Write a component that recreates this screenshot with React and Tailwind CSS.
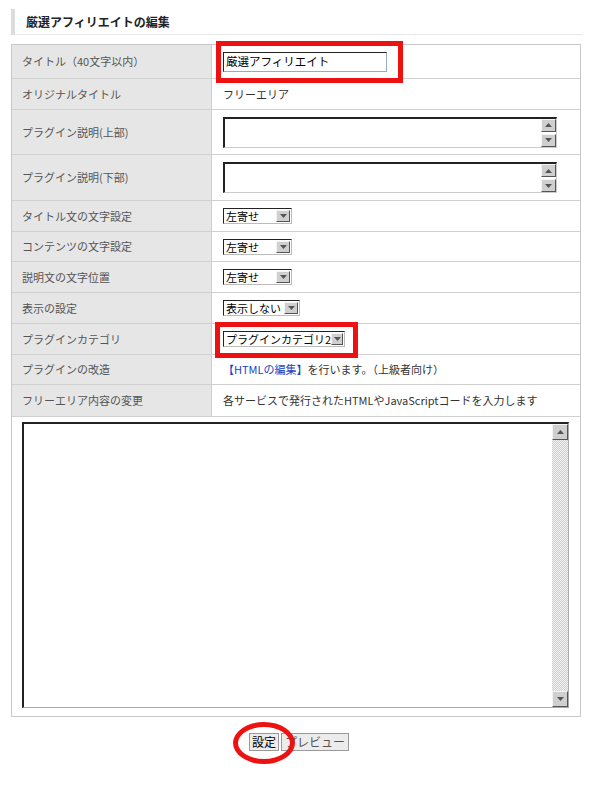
const FONT = { fontFamily: '"Noto Sans CJK JP", "Noto Sans", sans-serif' }

// 小さな三角形の矢印
function Tri({ dir = 'down' }) {
  return (
    <svg width="7" height="4" viewBox="0 0 7 4" className={dir === 'up' ? 'rotate-180' : ''}>
      <path d="M0 0h7L3.5 4z" fill="#555" />
    </svg>
  )
}

function ArrowBtn({ dir = 'down', className = '' }) {
  return (
    <div className={`flex items-center justify-center bg-[#cfcfcf] border border-t-[#f4f4f4] border-l-[#f4f4f4] border-b-[#555] border-r-[#555] ${className}`}>
      <Tri dir={dir} />
    </div>
  )
}

function Select({ label, width }) {
  return (
    <div className={`flex h-[16px] items-stretch bg-white border border-t-[#222] border-l-[#222] border-b-[#bbb] border-r-[#bbb] ${width}`}>
      <span className="flex-1 pl-[2px] text-[11px] leading-[14px] text-black whitespace-nowrap">{label}</span>
      <ArrowBtn className="w-[14px] my-[1px] mr-[1px]" />
    </div>
  )
}

function SmallArea() {
  return (
    <div className="flex h-[31px] w-[334px] bg-white border-2 border-t-[#222] border-l-[#222] border-b-[#ccc] border-r-[#ccc] border-b-[1px] border-r-[1px]">
      <div className="flex-1" />
      <div className="flex flex-col justify-between w-[15px]">
        <ArrowBtn dir="up" className="h-[13px]" />
        <ArrowBtn className="h-[13px]" />
      </div>
    </div>
  )
}

const ROWS = [
  { label: 'タイトル（40文字以内）', h: 'h-[34px]', value: (
    <div className="h-[20px] w-[164px] bg-white border border-t-[#222] border-l-[#222] border-b-[#9ab] border-r-[#9ab] px-[2px] text-[11.5px] leading-[17px] text-black">厳選アフィリエイト</div>
  ) },
  { label: 'オリジナルタイトル', h: 'h-[31px]', value: <span>フリーエリア</span> },
  { label: 'プラグイン説明(上部)', h: 'h-[45px]', value: <SmallArea /> },
  { label: 'プラグイン説明(下部)', h: 'h-[46px]', value: <SmallArea /> },
  { label: 'タイトル文の文字設定', h: 'h-[31px]', value: <Select label="左寄せ" width="w-[69px]" /> },
  { label: 'コンテンツの文字設定', h: 'h-[30px]', value: <Select label="左寄せ" width="w-[69px]" /> },
  { label: '説明文の文字位置', h: 'h-[31px]', value: <Select label="左寄せ" width="w-[69px]" /> },
  { label: '表示の設定', h: 'h-[31px]', value: <Select label="表示しない" width="w-[77px]" /> },
  { label: 'プラグインカテゴリ', h: 'h-[31px]', value: <Select label="プラグインカテゴリ2" width="w-[122px]" /> },
  { label: 'プラグインの改造', h: 'h-[30px]', value: (
    <span><span className="text-[#1b3fc4]">【HTMLの編集】</span>を行います。（上級者向け）</span>
  ) },
  { label: 'フリーエリア内容の変更', h: 'h-[32px]', value: <span>各サービスで発行されたHTMLやJavaScriptコードを入力します</span> },
]

export default function App() {
  return (
    <div className="relative w-[594px] h-[786px] bg-white text-[11px] text-[#333]" style={FONT}>
      {/* 見出し */}
      <div className="pt-[9px] px-[11px]">
        <div className="flex items-center h-[26px] border-l-4 border-[#dcdcdc] border-b border-b-[#e8e8e8] pl-[11px]">
          <h1 className="font-bold text-[12px] text-[#222]">厳選アフィリエイトの編集</h1>
        </div>
      </div>

      {/* 設定テーブル */}
      <div className="mt-[9px] ml-[11px] w-[570px] border border-[#c8c8c8]">
        {ROWS.map((row, i) => (
          <div key={i} className={`flex ${row.h} border-b border-[#d0d0d0]`}>
            <div className="flex items-center w-[200px] bg-[#e6e6e6] border-r border-[#cfcfcf] pl-[10px] text-[#555]">
              {row.label}
            </div>
            <div className="flex items-center flex-1 pl-[11px]">{row.value}</div>
          </div>
        ))}
        <div className="h-[299px] px-[10px] pt-[5px]">
          <div className="flex h-[286px] w-[547px] bg-white border-2 border-t-[#222] border-l-[#222] border-b-[#aaa] border-r-[#aaa] border-b-[1px] border-r-[1px]">
            <div className="flex-1" />
            <div className="flex flex-col w-[16px] bg-[#e4e4e4] bg-[repeating-conic-gradient(#cfcfcf_0_25%,#f2f2f2_0_50%)] bg-[length:2px_2px]">
              <ArrowBtn dir="up" className="h-[16px]" />
              <div className="flex-1" />
              <ArrowBtn className="h-[16px]" />
            </div>
          </div>
        </div>
      </div>

      {/* ボタン */}
      <div className="flex justify-center gap-[2px] mt-[16px] pl-[4px]">
        <button className="h-[18px] px-[2px] bg-[#ececec] border border-[#999] text-[12px] leading-[14px] text-black">設定</button>
        <button className="h-[18px] px-[3px] bg-[#ececec] border border-[#999] text-[12px] leading-[14px] text-[#555]">プレビュー</button>
      </div>

      {/* 赤い強調枠 */}
      <div className="absolute left-[216px] top-[41px] w-[187px] h-[42px] border-[5px] border-[#ee1111]" />
      <div className="absolute left-[215px] top-[322px] w-[143px] h-[36px] border-[5px] border-[#ee1111]" />
      <div className="absolute left-[233px] top-[722px] w-[62px] h-[42px] rounded-[50%] border-[5px] border-[#ee1111]" />
    </div>
  )
}
